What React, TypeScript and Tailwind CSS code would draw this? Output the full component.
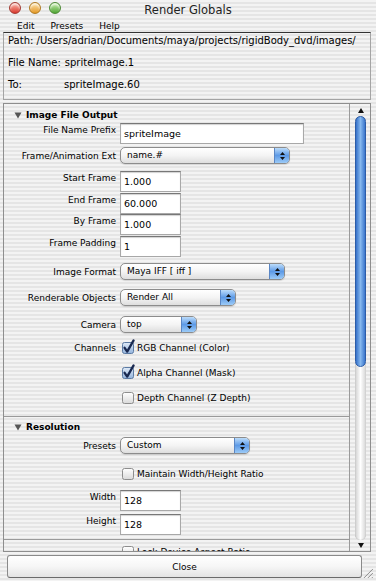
import React from "react";

const stripe =
  "bg-[image:repeating-linear-gradient(to_bottom,#f3f3f3_0px,#f3f3f3_2px,#e5e5e5_2px,#e5e5e5_4px)]";

function Popup({ className, text }: { className: string; text: string }) {
  return (
    <div
      className={`flex h-[17px] items-center rounded-[5px] border border-[#8c8c8c] bg-gradient-to-b from-white via-[#f4f4f4] to-[#dedede] shadow-[0_1px_1px_rgba(0,0,0,0.12)] ${className}`}
    >
      <span className="flex-1 pl-[6px] text-[9px] leading-none">{text}</span>
      <div className="flex h-full w-[15px] items-center justify-center rounded-r-[4px] border-l border-[#5a86c4] bg-gradient-to-b from-[#bcdcfa] via-[#5d9ae6] to-[#9ccbf7]">
        <svg width="7" height="10" viewBox="0 0 7 10">
          <path d="M3.5 1 L6 4 H1 Z M3.5 9 L6 6 H1 Z" fill="#111" />
        </svg>
      </div>
    </div>
  );
}

function Field({ className, value }: { className: string; value: string }) {
  return (
    <div
      className={`flex h-[21px] items-center border border-[#a8a8a8] border-t-[#777] bg-white pl-[3px] text-[9.5px] shadow-[inset_0_1px_1px_rgba(0,0,0,0.18)] ${className}`}
    >
      {value}
    </div>
  );
}

function Check({ checked }: { checked: boolean }) {
  return (
    <svg width="14" height="14" viewBox="0 0 14 14" className="shrink-0 overflow-visible">
      <defs>
        <linearGradient id="cbOn" x1="0" y1="0" x2="0" y2="1">
          <stop offset="0" stopColor="#dfeaf7" />
          <stop offset="1" stopColor="#93b3dc" />
        </linearGradient>
        <linearGradient id="cbOff" x1="0" y1="0" x2="0" y2="1">
          <stop offset="0" stopColor="#ffffff" />
          <stop offset="1" stopColor="#d9d9d9" />
        </linearGradient>
      </defs>
      <rect
        x="1.5"
        y="1.5"
        width="11"
        height="11"
        rx="2"
        fill={checked ? "url(#cbOn)" : "url(#cbOff)"}
        stroke={checked ? "#5b7aa3" : "#8d8d8d"}
      />
      {checked && (
        <path
          d="M3.6 6.8 L6.2 10.6 L12.6 -0.6"
          stroke="#182850"
          strokeWidth="2.3"
          fill="none"
          strokeLinecap="round"
          strokeLinejoin="round"
        />
      )}
    </svg>
  );
}

function LabelTop({ children }: { children: React.ReactNode }) {
  return <div className="mb-[7px] w-[112px] shrink-0 text-right">{children}</div>;
}
function LabelMid({ children }: { children: React.ReactNode }) {
  return <div className="w-[112px] shrink-0 text-right">{children}</div>;
}

function Tri() {
  return (
    <svg width="8" height="7" viewBox="0 0 8 7" className="ml-[10px] mr-[4px]">
      <path d="M0.5 0.5 H7.5 L4 6.5 Z" fill="#555" />
    </svg>
  );
}

function Light({ from, to, border }: { from: string; to: string; border: string }) {
  return (
    <div
      className={`h-[12px] w-[12px] rounded-full border ${border} bg-gradient-to-b ${from} ${to} shadow-[inset_0_2px_2px_rgba(255,255,255,0.7)]`}
    />
  );
}

function CheckRow({ checked, text, className }: { checked: boolean; text: string; className: string }) {
  return (
    <div className={`flex h-[16px] items-center ${className}`}>
      <div className="w-[112px] shrink-0" />
      <div className="ml-[5px] flex items-center gap-[2px]">
        <Check checked={checked} />
        <span>{text}</span>
      </div>
    </div>
  );
}

export default function App() {
  return (
    <div
      className={`flex h-[581px] w-[376px] flex-col overflow-hidden ${stripe} font-['DejaVu_Sans','Liberation_Sans',sans-serif] text-[9px] leading-[14px] text-black`}
    >
      {/* Title bar */}
      <div className="grid h-[19px] grid-cols-[1fr_auto_1fr] items-start">
        <div className="flex gap-[8px] pl-[9px] pt-[2px]">
          <Light from="from-[#f7b0a8]" to="to-[#d9342c]" border="border-[#a33b33]" />
          <Light from="from-[#fbe0a2]" to="to-[#e49a1c]" border="border-[#b07a23]" />
          <Light from="from-[#c6ecaa]" to="to-[#4fa632]" border="border-[#4d8a35]" />
        </div>
        <div className="flex h-[19px] items-center text-[11.5px] text-[#222]">Render Globals</div>
        <div />
      </div>

      {/* Menu */}
      <div className="flex h-[13px] items-center gap-[16px] pl-[17px]">
        <span>Edit</span>
        <span>Presets</span>
        <span>Help</span>
      </div>

      {/* Info panel */}
      <div className="ml-[3px] flex h-[68px] w-[368px] flex-col gap-[8px] border border-[#a4a4a4] border-t-[#333] pl-[4px] pt-[1px] text-[10px]">
        <div className="flex h-[14px] items-center">
          Path: /Users/adrian/Documents/maya/projects/rigidBody_dvd/images/
        </div>
        <div className="flex h-[14px] items-center">
          <span>File Name:</span>
          <span className="ml-[4px]">spriteImage.1</span>
        </div>
        <div className="flex h-[14px] items-center">
          <span className="w-[56px]">To:</span>
          <span>spriteImage.60</span>
        </div>
      </div>

      {/* Scroll view */}
      <div className="ml-[3px] mt-[3px] flex h-[449px] w-[368px] border border-[#8e8e8e]">
        <div className="w-[346px] overflow-hidden border-r border-[#9a9a9a]">
          {/* Section 1 */}
          <div className="flex flex-col border-b border-[#9a9a9a] pb-[10px]">
            <div className="flex h-[19px] items-center pt-[3px] font-bold">
              <Tri />
              Image File Output
            </div>
            <div className="flex items-center">
              <LabelTop>File Name Prefix</LabelTop>
              <Field className="ml-[4px] w-[184px]" value="spriteImage" />
            </div>
            <div className="mt-[3px] flex items-center">
              <LabelMid>Frame/Animation Ext</LabelMid>
              <Popup className="ml-[4px] w-[170px]" text="name.#" />
            </div>
            <div className="mt-[7px] flex items-center">
              <LabelTop>Start Frame</LabelTop>
              <Field className="ml-[4px] w-[61px]" value="1.000" />
            </div>
            <div className="mt-[1px] flex items-center">
              <LabelTop>End Frame</LabelTop>
              <Field className="ml-[4px] w-[61px]" value="60.000" />
            </div>
            <div className="flex items-center">
              <LabelTop>By Frame</LabelTop>
              <Field className="ml-[4px] w-[61px]" value="1.000" />
            </div>
            <div className="mt-[1px] flex items-center">
              <LabelTop>Frame Padding</LabelTop>
              <Field className="ml-[4px] w-[61px]" value="1" />
            </div>
            <div className="mt-[6px] flex items-center">
              <LabelMid>Image Format</LabelMid>
              <Popup className="ml-[4px] w-[165px]" text="Maya IFF [ iff ]" />
            </div>
            <div className="mt-[9px] flex items-center">
              <LabelMid>Renderable Objects</LabelMid>
              <Popup className="ml-[4px] w-[116px]" text="Render All" />
            </div>
            <div className="mt-[10px] flex items-center">
              <LabelMid>Camera</LabelMid>
              <Popup className="ml-[4px] w-[77px]" text="top" />
            </div>
            <div className="mt-[7px] flex h-[16px] items-center">
              <LabelMid>Channels</LabelMid>
              <div className="ml-[5px] flex items-center gap-[2px]">
                <Check checked />
                <span>RGB Channel (Color)</span>
              </div>
            </div>
            <CheckRow className="mt-[9px]" checked text="Alpha Channel (Mask)" />
            <CheckRow className="mt-[9px]" checked={false} text="Depth Channel (Z Depth)" />
          </div>

          {/* Section 2 */}
          <div className="flex flex-col border-b border-[#9a9a9a] pb-[4px]">
            <div className="flex h-[20px] items-center font-bold">
              <Tri />
              Resolution
            </div>
            <div className="flex items-center">
              <LabelMid>Presets</LabelMid>
              <Popup className="ml-[4px] w-[130px]" text="Custom" />
            </div>
            <CheckRow className="mt-[12px]" checked={false} text="Maintain Width/Height Ratio" />
            <div className="mt-[8px] flex items-center">
              <LabelTop>Width</LabelTop>
              <Field className="ml-[4px] w-[61px]" value="128" />
            </div>
            <div className="mt-[3px] flex items-center">
              <LabelTop>Height</LabelTop>
              <Field className="ml-[4px] w-[61px]" value="128" />
            </div>
          </div>

          {/* Section 3 (clipped) */}
          <CheckRow className="mt-[4px]" checked={false} text="Lock Device Aspect Ratio" />
        </div>

        {/* Scrollbar */}
        <div className="flex w-[20px] flex-col items-center pt-[4px]">
          <svg width="6" height="5" viewBox="0 0 6 5" className="ml-[1px]">
            <path d="M3 0 L6 5 H0 Z" fill="#111" />
          </svg>
          <div className="mt-[3px] flex h-[424px] w-[11px] flex-col rounded-full bg-gradient-to-r from-[#cfcfcf] via-[#ffffff] to-[#d4d4d4] shadow-[inset_0_0_1px_rgba(0,0,0,0.3)]">
            <div className="h-[251px] w-[11px] rounded-full border border-[#2b5ca8] bg-gradient-to-r from-[#3570c8] via-[#86b8ee] to-[#3b76cc]" />
          </div>
          <svg width="6" height="5" viewBox="0 0 6 5" className="ml-[1px] mt-[3px]">
            <path d="M0 0 H6 L3 5 Z" fill="#111" />
          </svg>
        </div>
      </div>

      {/* Close button row */}
      <div className="mt-[3px] flex">
        <div className="ml-[7px] flex h-[23px] w-[360px] items-center justify-center rounded-[3px] border border-[#8a8a8a] border-b-[#6a6a6a] bg-gradient-to-b from-white via-[#f6f6f6] to-[#e3e3e3]">
          Close
        </div>
        <svg width="12" height="12" viewBox="0 0 12 12" className="ml-auto mr-[2px] mt-[12px]">
          <path d="M11 2 L2 11 M11 6 L6 11 M11 10 L10 11" stroke="#8a8a8a" strokeWidth="1" />
        </svg>
      </div>
    </div>
  );
}
